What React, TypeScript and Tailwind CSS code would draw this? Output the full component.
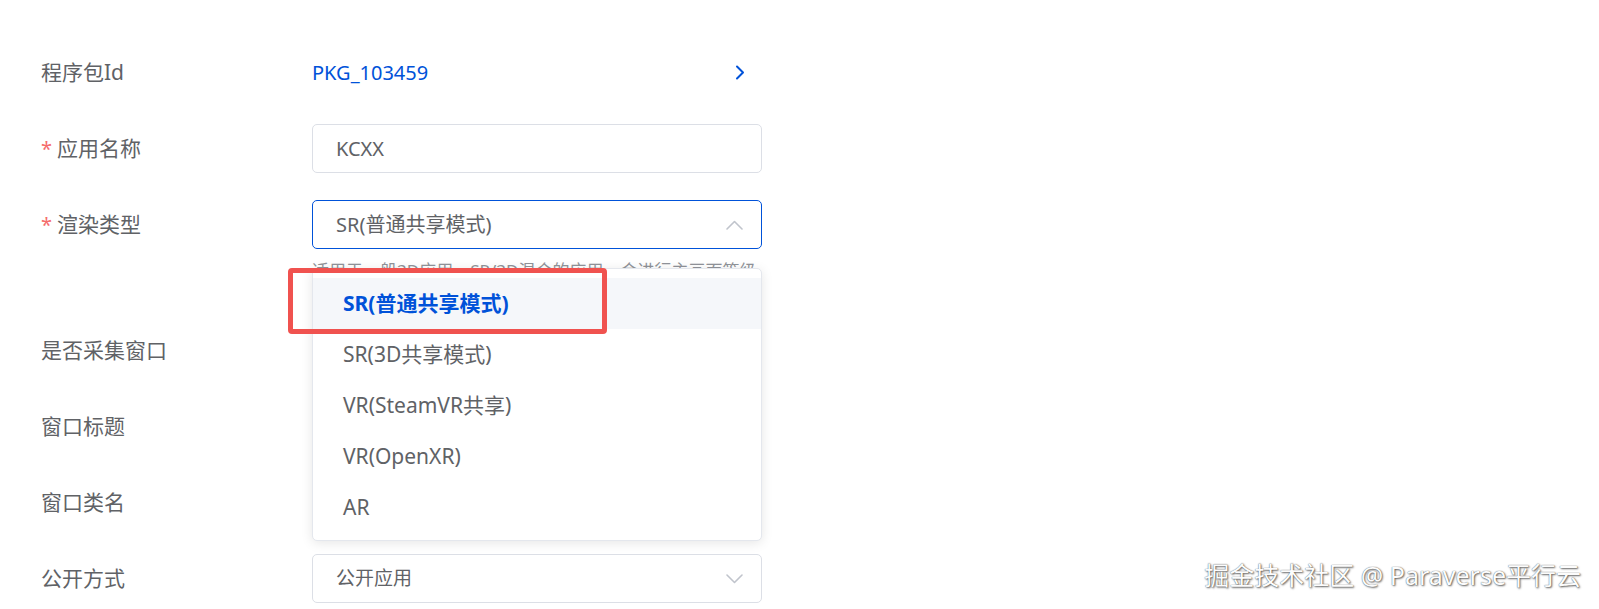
import React from "react";

const FONT = '"Noto Sans", "Noto Sans CJK SC", sans-serif';

function ChevronRight() {
  return (
    <svg width="10" height="15" viewBox="0 0 10 15" fill="none">
      <path d="M2 1.5 L8 7.5 L2 13.5" stroke="#0052d9" strokeWidth="2" strokeLinecap="round" strokeLinejoin="round" />
    </svg>
  );
}

function ChevronUp() {
  return (
    <svg width="17" height="10" viewBox="0 0 17 10" fill="none">
      <path d="M1 9 L8.5 1.5 L16 9" stroke="#c0c4cc" strokeWidth="1.6" strokeLinecap="round" strokeLinejoin="round" />
    </svg>
  );
}

function ChevronDown() {
  return (
    <svg width="17" height="10" viewBox="0 0 17 10" fill="none">
      <path d="M1 1 L8.5 8.5 L16 1" stroke="#c0c4cc" strokeWidth="1.6" strokeLinecap="round" strokeLinejoin="round" />
    </svg>
  );
}

function Label({ text, required }: { text: string; required?: boolean }) {
  return (
    <div className="w-[271px] shrink-0 text-[21px] text-[#606266] flex items-center">
      {required && <span className="text-[#f56c6c] mr-[5px] text-[20px]">*</span>}
      <span>{text}</span>
    </div>
  );
}

const options = ["SR(普通共享模式)", "SR(3D共享模式)", "VR(SteamVR共享)", "VR(OpenXR)", "AR"];

export default function App() {
  return (
    <div className="relative w-full h-[609px] bg-white overflow-hidden" style={{ fontFamily: FONT }}>
      <div className="flex flex-col gap-[27px] pl-[41px] pt-[48px]">
        {/* 程序包Id */}
        <div className="flex items-center h-[49px]">
          <Label text="程序包Id" />
          <div className="w-[450px] flex items-center justify-between pr-[17px]">
            <span className="text-[20px] text-[#0052d9]">PKG_103459</span>
            <ChevronRight />
          </div>
        </div>

        {/* 应用名称 */}
        <div className="flex items-center h-[49px]">
          <Label text="应用名称" required />
          <div className="w-[450px] h-[49px] border border-[#dcdfe6] rounded-[5px] flex items-center pl-[23px] text-[20px] text-[#606266]">
            KCXX
          </div>
        </div>

        {/* 渲染类型 */}
        <div className="flex items-start">
          <div className="h-[49px] flex items-center">
            <Label text="渲染类型" required />
          </div>
          <div className="relative w-[450px] flex flex-col">
            <div className="h-[49px] border border-[#0052d9] rounded-[5px] flex items-center justify-between pl-[23px] pr-[18px] text-[20px] text-[#606266]">
              <span>SR(普通共享模式)</span>
              <ChevronUp />
            </div>
            <div className="h-[50px] pt-[9px] text-[17px] leading-[26px] text-[#909399] whitespace-nowrap overflow-hidden">
              适用于一般3D应用，SR/3D混合的应用，会进行主画面等级
            </div>

            {/* dropdown */}
            <div className="absolute left-0 right-0 top-[68px] z-10 bg-white border border-[#e4e7ed] rounded-[5px] shadow-[0_2px_12px_rgba(0,0,0,0.1)] pt-[9px] pb-[7px]">
              {options.map((o, i) => (
                <div
                  key={o}
                  className={
                    i === 0
                      ? "h-[51px] flex items-center pl-[30px] text-[21px] bg-[#f5f7fa] text-[#0052d9] font-bold"
                      : "h-[51px] flex items-center pl-[30px] text-[21px] text-[#606266]"
                  }
                >
                  {o}
                </div>
              ))}
            </div>

            {/* annotation box */}
            <div className="absolute left-[-24px] top-[68px] w-[319px] h-[66px] border-[5px] border-[#f0524f] rounded-[4px] z-20" />
          </div>
        </div>

        {/* 是否采集窗口 */}
        <div className="flex items-center h-[49px]">
          <Label text="是否采集窗口" />
          <div className="w-[450px]" />
        </div>

        {/* 窗口标题 */}
        <div className="flex items-center h-[49px]">
          <Label text="窗口标题" />
          <div className="w-[450px] h-[49px] border border-[#dcdfe6] rounded-[5px]" />
        </div>

        {/* 窗口类名 */}
        <div className="flex items-center h-[49px]">
          <Label text="窗口类名" />
          <div className="w-[450px] h-[49px] border border-[#dcdfe6] rounded-[5px]" />
        </div>

        {/* 公开方式 */}
        <div className="flex items-center h-[49px]">
          <Label text="公开方式" />
          <div className="w-[450px] h-[49px] border border-[#dcdfe6] rounded-[5px] flex items-center justify-between pl-[23px] pr-[18px] text-[19px] text-[#606266]">
            <span>公开应用</span>
            <ChevronDown />
          </div>
        </div>
      </div>

      {/* watermark */}
      <div className="absolute right-[18px] top-[557px] text-[25px] text-[#fcfcfc] [text-shadow:0_0_1px_#444,1px_1px_2px_#666] whitespace-nowrap">
        掘金技术社区 @ Paraverse平行云
      </div>
    </div>
  );
}
